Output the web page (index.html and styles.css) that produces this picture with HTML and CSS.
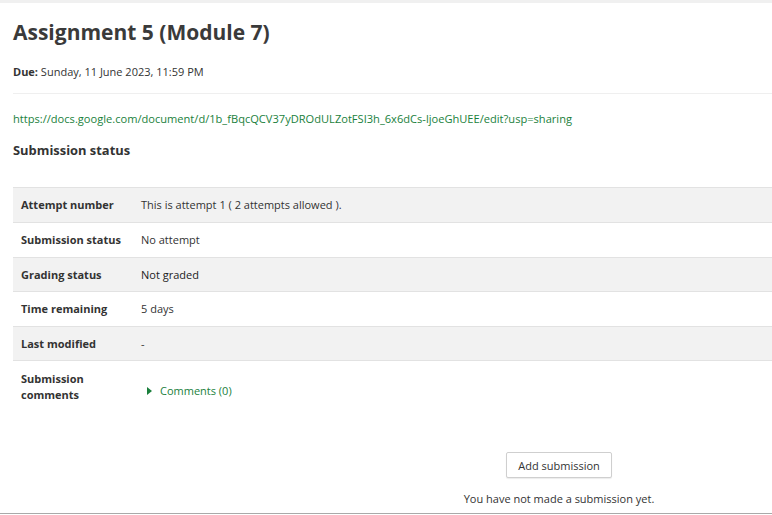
FILE: index.html
```html
<!DOCTYPE html>
<html lang="en">
<head>
<meta charset="utf-8">
<title>Assignment 5 (Module 7)</title>
<link rel="stylesheet" href="styles.css">
</head>
<body>
<div class="topstrip"></div>
<main class="page">
  <h1 class="title">Assignment 5 (Module 7)</h1>
  <div class="dates"><strong>Due:</strong> Sunday, 11 June 2023, 11:59 PM</div>
  <hr class="sep">
  <p class="intro"><a href="#" class="link">https://docs.google.com/document/d/1b_fBqcQCV37yDROdULZotFSI3h_6x6dCs-ljoeGhUEE/edit?usp=sharing</a></p>
  <h3 class="subhead">Submission status</h3>
  <table class="status">
    <tbody>
      <tr class="odd"><th>Attempt number</th><td>This is attempt 1 ( 2 attempts allowed ).</td></tr>
      <tr><th>Submission status</th><td>No attempt</td></tr>
      <tr class="odd short"><th>Grading status</th><td class="graded">Not graded</td></tr>
      <tr><th>Time remaining</th><td>5 days</td></tr>
      <tr class="odd short"><th>Last modified</th><td>-</td></tr>
      <tr class="last"><th>Submission<br>comments</th><td><a href="#" class="comments"><span class="tri"></span>Comments (0)</a></td></tr>
    </tbody>
  </table>
  <div class="actions">
    <button class="btn" type="button">Add submission</button>
    <div class="note">You have not made a submission yet.</div>
  </div>
</main>
<div class="bottomline"></div>
</body>
</html>
```
FILE: styles.css
```css
html, body {
  margin: 0;
  padding: 0;
  background: #ffffff;
  font-family: "Open Sans", "Noto Sans", sans-serif;
  color: #333333;
  overflow: hidden;
}
.topstrip {
  height: 3px;
  background: #f0f0f0;
}
.page {
  padding-left: 13px;
  height: 510px;
  box-sizing: border-box;
}
.title {
  margin: 0;
  padding-top: 16px;
  font-size: 21px;
  line-height: 26px;
  font-weight: 700;
  color: #3a3a3a;
}
.dates {
  margin-top: 19px;
  font-size: 11px;
  line-height: 16px;
}
.dates strong { font-weight: 700; }
.sep {
  margin: 13px 0 0 0;
  border: 0;
  border-top: 1px solid #efefef;
  height: 0;
}
.intro {
  margin: 17px 0 0 0;
  font-size: 11.1px;
  line-height: 16px;
}
.link {
  color: #1a7f3c;
  text-decoration: none;
}
.subhead {
  margin: 15px 0 0 0;
  font-size: 12.9px;
  line-height: 16px;
  font-weight: 700;
}
.status {
  margin-top: 29px;
  border-collapse: collapse;
  width: 800px;
  font-size: 11px;
}
.status th, .status td {
  text-align: left;
  padding: 0 8px;
  height: 34px;
  border-top: 1px solid #e2e2e2;
  vertical-align: middle;
  line-height: 16px;
}
.status tr.short th, .status tr.short td { height: 33px; }
.status th {
  width: 104px;
  font-weight: 700;
}
.status td { font-weight: 400; }
.status td.graded { color: #222; }
.status tr.odd th, .status tr.odd td { background: #f2f2f2; }
.status tr.last th, .status tr.last td { height: 60px; }
.status tr.last th {
  vertical-align: top;
  padding-top: 10px;
  box-sizing: border-box;
}
.comments {
  color: #1a7f3c;
  text-decoration: none;
  display: inline-flex;
  align-items: center;
  padding-left: 6px;
}
.tri {
  width: 0;
  height: 0;
  border-top: 4px solid transparent;
  border-bottom: 4px solid transparent;
  border-left: 5px solid #1a7f3c;
  margin-right: 8px;
}
.actions {
  margin-top: 31px;
  margin-left: 333px;
  width: 426px;
  display: flex;
  flex-direction: column;
  align-items: center;
}
.btn {
  font-family: inherit;
  font-size: 11px;
  color: #333;
  background: #fff;
  border: 1px solid #cfcfcf;
  border-radius: 2px;
  height: 26px;
  padding: 0 11.5px;
  box-shadow: 0 1px 1px rgba(0,0,0,0.08);
}
.note {
  margin-top: 13px;
  font-size: 11px;
  line-height: 16px;
}
.bottomline {
  height: 1px;
  background: #a9a9a9;
}
```
